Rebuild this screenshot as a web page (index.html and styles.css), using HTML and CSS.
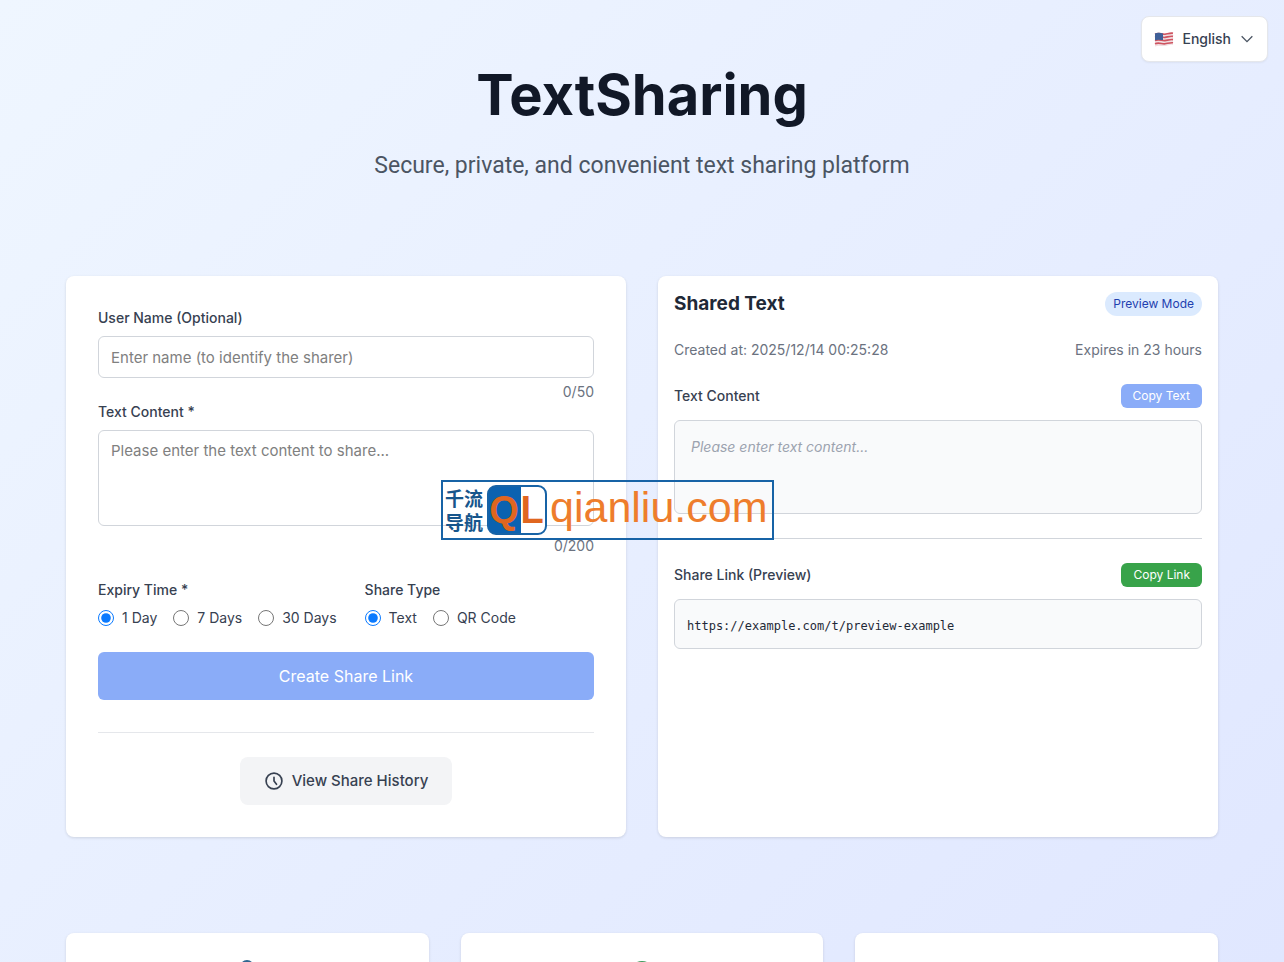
FILE: index.html
```html
<!DOCTYPE html>
<html lang="en">
<head>
    <meta charset="UTF-8">
    <meta name="viewport" content="width=device-width, initial-scale=1.0">
    <title>TextSharing</title>
    <link rel="stylesheet" href="styles.css">
</head>
<body>
    <button type="button" class="language">
        <svg class="flag" viewBox="0 0 20 16" aria-hidden="true">
            <path d="M1 2.500C5 .5 8 3 11 2.500S17 1 19 1.500V14C16 13 14 14.500 11 15S5 14 1 15.500Z" fill="#f0dfe2"/>
            <path d="M1 3.200C5 1.200 8 3.700 11 3.200S17 1.700 19 2.200M1 6.400C5 4.400 8 6.900 11 6.400S17 4.900 19 5.400M1 9.600C5 7.600 8 10.100 11 9.600S17 8.100 19 8.600M1 12.800C5 10.800 8 13.300 11 12.800S17 11.300 19 11.800" fill="none" stroke="#cf5460" stroke-width="1.600"/>
            <path d="M1 2.500C4 1 7 2.200 9 2.500V9C7 9 4 8 1 9.300Z" fill="#3f6098"/>
        </svg>
        <span>English</span>
        <svg class="chevron" viewBox="0 0 24 24" aria-hidden="true"><path d="M4 8l8 8 8-8"/></svg>
    </button>

    <div class="container">
        <header>
            <h1>TextSharing</h1>
            <p>Secure, private, and convenient text sharing platform</p>
        </header>

        <main class="panels">
            <form class="card form-card">
                <label class="label" for="name">User Name (Optional)</label>
                <input class="field" type="text" id="name" maxlength="50" placeholder="Enter name (to identify the sharer)">
                <div class="counter">0/50</div>

                <label class="label" for="content">Text Content *</label>
                <textarea class="field" id="content" maxlength="200" placeholder="Please enter the text content to share..."></textarea>
                <div class="counter content-counter">0/200</div>

                <div class="options">
                    <fieldset>
                        <legend class="label">Expiry Time *</legend>
                        <div class="radios">
                            <label><input type="radio" name="expiry" checked>1 Day</label>
                            <label><input type="radio" name="expiry">7 Days</label>
                            <label><input type="radio" name="expiry">30 Days</label>
                        </div>
                    </fieldset>
                    <fieldset>
                        <legend class="label">Share Type</legend>
                        <div class="radios">
                            <label><input type="radio" name="type" checked>Text</label>
                            <label><input type="radio" name="type">QR Code</label>
                        </div>
                    </fieldset>
                </div>

                <button type="submit" class="create" disabled>Create Share Link</button>

                <div class="history">
                    <button type="button">
                        <svg viewBox="0 0 24 24" aria-hidden="true"><path d="M12 7.500V12l3 4M21.500 12a9.500 9.500 0 11-19 0 9.500 9.500 0 0119 0z"/></svg>
                        View Share History
                    </button>
                </div>
            </form>

            <section class="card preview-card">
                <div class="row title-row">
                    <h2>Shared Text</h2>
                    <span class="badge">Preview Mode</span>
                </div>
                <div class="row meta">
                    <span>Created at: 2025/12/14 00:25:28</span>
                    <span>Expires in 23 hours</span>
                </div>
                <div class="row">
                    <h3>Text Content</h3>
                    <button type="button" class="copy copy-text" disabled>Copy Text</button>
                </div>
                <div class="box text-box">Please enter text content...</div>
                <hr>
                <div class="row">
                    <h3>Share Link (Preview)</h3>
                    <button type="button" class="copy copy-link">Copy Link</button>
                </div>
                <div class="box link-box">https://example.com/t/preview-example</div>
            </section>

            <div class="stamp">
                <span class="stamp-name"><span>千流</span><span>导航</span></span>
                <span class="stamp-logo"><b>Q</b><b>L</b></span>
                <span class="stamp-domain">qianliu.com</span>
            </div>
        </main>

        <section class="features">
            <div class="card">
                <svg viewBox="0 0 32 32" aria-hidden="true"><path d="M10 14V10a6 6 0 0112 0v4M7 14h18v14H7z" stroke="#2f6690"/></svg>
            </div>
            <div class="card">
                <svg viewBox="0 0 32 32" aria-hidden="true"><circle cx="16" cy="17" r="12" stroke="#3f9a5c"/></svg>
            </div>
            <div class="card">
                <svg viewBox="0 0 32 32" aria-hidden="true"><path d="M8 12h16v12H8z" stroke="#7c3aed"/></svg>
            </div>
        </section>
    </div>
</body>
</html>
```
FILE: styles.css
```css
* {
    box-sizing: border-box;
}
body {
    margin: 0;
    min-height: 100vh;
    font-family: Inter, "Liberation Sans", sans-serif;
    font-size: 14px;
    line-height: 20px;
    color: #374151;
    background: linear-gradient(135deg, #eff6ff, #e0e7ff) fixed;
}
h1, h2, h3, p {
    margin: 0;
}
button, input, textarea {
    font: inherit;
}
button {
    border: none;
    cursor: pointer;
}
.container {
    max-width: 1184px;
    margin: 0 auto;
    padding: 64px 16px;
}
.language {
    position: absolute;
    top: 16px;
    right: 16px;
    display: flex;
    align-items: center;
    gap: 8px;
    padding: 12px;
    border: 1px solid #e5e7eb;
    border-radius: 8px;
    background: #fff;
    color: #374151;
    font-weight: 500;
    box-shadow: 0 1px 2px rgba(0, 0, 0, 0.05);
}
.flag {
    width: 20px;
    height: 16px;
}
.chevron {
    width: 16px;
    height: 16px;
    fill: none;
    stroke: #4b5563;
    stroke-width: 2;
}
header {
    margin-bottom: 94px;
    text-align: center;
}
h1 {
    margin-bottom: 24px;
    font-size: 56px;
    line-height: 62px;
    font-weight: 700;
    color: #111827;
}
header p {
    font-family: Roboto, Inter, sans-serif;
    font-size: 23px;
    line-height: 32px;
    color: #4b5563;
}
.panels {
    position: relative;
    display: grid;
    grid-template-columns: 1fr 1fr;
    gap: 32px;
}
.card {
    background: #fff;
    border-radius: 8px;
    box-shadow: 0 1px 3px rgba(0, 0, 0, 0.12);
}
.form-card {
    padding: 32px;
}
.label {
    display: block;
    margin-bottom: 8px;
    padding: 0;
    font-weight: 500;
}
.field {
    display: block;
    width: 100%;
    padding: 8px 12px;
    border: 1px solid #d1d5db;
    border-radius: 6px;
    background: #fff;
    font-size: 15px;
    line-height: 24px;
}
input.field {
    height: 42px;
}
.field::placeholder {
    color: #808080;
}
textarea.field {
    height: 96px;
    resize: none;
}
.counter {
    margin-top: 4px;
    text-align: right;
    color: #6b7280;
}
.content-counter {
    margin-top: 10px;
}
.options {
    display: flex;
    gap: 28px;
    margin: 24px 0;
}
fieldset {
    margin: 0;
    padding: 0;
    border: none;
}
.radios {
    display: flex;
    gap: 16px;
}
.radios label {
    display: flex;
    align-items: center;
    gap: 8px;
}
.radios input {
    width: 16px;
    height: 16px;
    margin: 0;
    accent-color: #0a7aff;
}
.create {
    width: 100%;
    padding: 12px;
    border-radius: 6px;
    background: #8aacf8;
    color: #fff;
    font-size: 16px;
    line-height: 24px;
}
.history {
    display: flex;
    justify-content: center;
    margin-top: 32px;
    padding-top: 24px;
    border-top: 1px solid #e5e7eb;
}
.history button {
    display: flex;
    align-items: center;
    gap: 8px;
    padding: 12px 24px;
    border-radius: 8px;
    background: #f3f4f6;
    color: #374151;
    font-size: 15px;
    line-height: 24px;
    font-weight: 500;
}
.history svg {
    width: 20px;
    height: 20px;
    fill: none;
    stroke: #374151;
    stroke-width: 2;
    stroke-linecap: round;
}
.preview-card {
    padding: 16px;
}
.row {
    display: flex;
    align-items: center;
    justify-content: space-between;
    margin-bottom: 12px;
}
.title-row, .meta {
    margin-bottom: 24px;
}
h2 {
    font-size: 19px;
    line-height: 24px;
    font-weight: 700;
    color: #1f2937;
}
h3 {
    font-size: 14px;
    font-weight: 500;
}
.meta {
    color: #6b7280;
}
.badge {
    padding: 4px 8px;
    border-radius: 12px;
    background: #dbeafe;
    color: #1e40af;
    font-size: 12px;
    line-height: 16px;
}
.copy {
    padding: 4px 12px;
    border-radius: 6px;
    color: #fff;
    font-size: 12px;
    line-height: 16px;
}
.copy-text {
    background: #8aacf8;
}
.copy-link {
    background: #38a34a;
}
.box {
    padding: 16px;
    border: 1px solid #d1d5db;
    border-radius: 6px;
    background: #f9fafb;
}
.text-box {
    min-height: 94px;
    color: #9ca3af;
    font-style: italic;
}
hr {
    margin: 24px 0;
    border: none;
    border-top: 1px solid #d1d5db;
}
.link-box {
    padding: 18px 12px 14px;
    color: #1f2937;
    font-family: "DejaVu Sans Mono", monospace;
    font-size: 12px;
    line-height: 16px;
}
.stamp {
    position: absolute;
    top: 204px;
    left: 375px;
    display: flex;
    align-items: center;
    width: 333px;
    height: 60px;
    padding-left: 2px;
    border: 2px solid #1763a6;
    white-space: nowrap;
}
.stamp-name {
    display: flex;
    flex-direction: column;
    width: 40px;
    color: #17568c;
    font-family: "Noto Sans CJK SC", sans-serif;
    font-size: 19px;
    line-height: 24px;
    font-weight: 700;
}
.stamp-logo {
    display: grid;
    grid-template-columns: 30px 26px;
    flex-shrink: 0;
    width: 60px;
    height: 50px;
    margin-left: 2px;
    border: 2px solid #1763a6;
    border-radius: 9px;
    background: linear-gradient(to right, #0b62b0 32px, #fff 32px);
    color: #e0661f;
    font-family: "Liberation Sans", sans-serif;
    font-size: 38px;
    line-height: 46px;
    text-align: center;
}
.stamp-domain {
    margin-left: 3px;
    padding-bottom: 6px;
    color: #ee7d2c;
    font-family: "Liberation Sans", sans-serif;
    font-size: 43px;
    line-height: 48px;
}
.features {
    display: grid;
    grid-template-columns: repeat(3, 1fr);
    gap: 32px;
    margin-top: 96px;
}
.features .card {
    padding: 24px;
    text-align: center;
}
.features svg {
    width: 32px;
    height: 32px;
    fill: none;
    stroke-width: 2;
}
```
